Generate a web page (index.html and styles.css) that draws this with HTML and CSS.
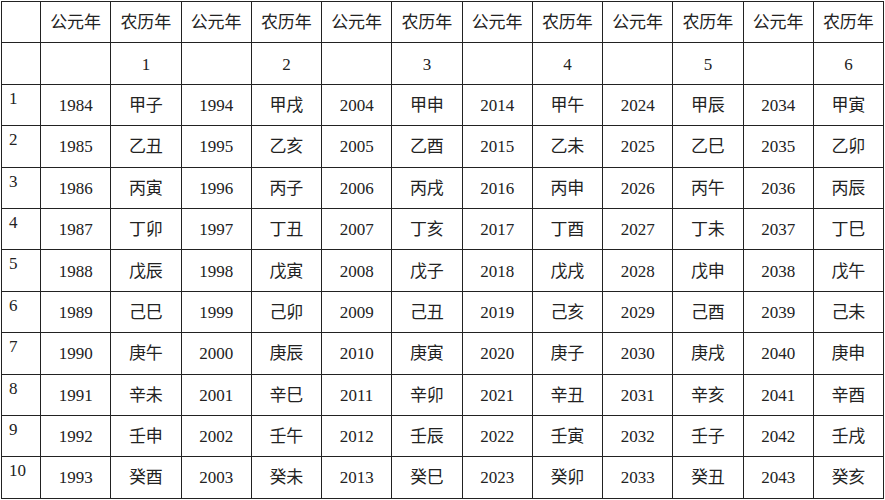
FILE: index.html
```html
<!DOCTYPE html>
<html lang="zh-CN">
<head>
  <meta charset="UTF-8">
  <title>公元年与农历年对照表</title>
  <link rel="stylesheet" href="styles.css">
</head>
<body>

<table class="year-table">
  <colgroup>
    <col class="col-index">
    <col span="12" class="col-year">
  </colgroup>
  <tr>
    <td></td>
    <td>公元年</td><td>农历年</td>
    <td>公元年</td><td>农历年</td>
    <td>公元年</td><td>农历年</td>
    <td>公元年</td><td>农历年</td>
    <td>公元年</td><td>农历年</td>
    <td>公元年</td><td>农历年</td>
  </tr>
  <tr>
    <td></td>
    <td></td><td>1</td>
    <td></td><td>2</td>
    <td></td><td>3</td>
    <td></td><td>4</td>
    <td></td><td>5</td>
    <td></td><td>6</td>
  </tr>
  <tr>
    <td class="num">1</td>
    <td>1984</td><td>甲子</td><td>1994</td><td>甲戌</td><td>2004</td><td>甲申</td>
    <td>2014</td><td>甲午</td><td>2024</td><td>甲辰</td><td>2034</td><td>甲寅</td>
  </tr>
  <tr>
    <td class="num">2</td>
    <td>1985</td><td>乙丑</td><td>1995</td><td>乙亥</td><td>2005</td><td>乙酉</td>
    <td>2015</td><td>乙未</td><td>2025</td><td>乙巳</td><td>2035</td><td>乙卯</td>
  </tr>
  <tr>
    <td class="num">3</td>
    <td>1986</td><td>丙寅</td><td>1996</td><td>丙子</td><td>2006</td><td>丙戌</td>
    <td>2016</td><td>丙申</td><td>2026</td><td>丙午</td><td>2036</td><td>丙辰</td>
  </tr>
  <tr>
    <td class="num">4</td>
    <td>1987</td><td>丁卯</td><td>1997</td><td>丁丑</td><td>2007</td><td>丁亥</td>
    <td>2017</td><td>丁酉</td><td>2027</td><td>丁未</td><td>2037</td><td>丁巳</td>
  </tr>
  <tr>
    <td class="num">5</td>
    <td>1988</td><td>戊辰</td><td>1998</td><td>戊寅</td><td>2008</td><td>戊子</td>
    <td>2018</td><td>戊戌</td><td>2028</td><td>戊申</td><td>2038</td><td>戊午</td>
  </tr>
  <tr>
    <td class="num">6</td>
    <td>1989</td><td>己巳</td><td>1999</td><td>己卯</td><td>2009</td><td>己丑</td>
    <td>2019</td><td>己亥</td><td>2029</td><td>己酉</td><td>2039</td><td>己未</td>
  </tr>
  <tr>
    <td class="num">7</td>
    <td>1990</td><td>庚午</td><td>2000</td><td>庚辰</td><td>2010</td><td>庚寅</td>
    <td>2020</td><td>庚子</td><td>2030</td><td>庚戌</td><td>2040</td><td>庚申</td>
  </tr>
  <tr>
    <td class="num">8</td>
    <td>1991</td><td>辛未</td><td>2001</td><td>辛巳</td><td>2011</td><td>辛卯</td>
    <td>2021</td><td>辛丑</td><td>2031</td><td>辛亥</td><td>2041</td><td>辛酉</td>
  </tr>
  <tr>
    <td class="num">9</td>
    <td>1992</td><td>壬申</td><td>2002</td><td>壬午</td><td>2012</td><td>壬辰</td>
    <td>2022</td><td>壬寅</td><td>2032</td><td>壬子</td><td>2042</td><td>壬戌</td>
  </tr>
  <tr>
    <td class="num">10</td>
    <td>1993</td><td>癸酉</td><td>2003</td><td>癸未</td><td>2013</td><td>癸巳</td>
    <td>2023</td><td>癸卯</td><td>2033</td><td>癸丑</td><td>2043</td><td>癸亥</td>
  </tr>
</table>

</body>
</html>
```

FILE: styles.css
```css
body {
  margin: 0;
  padding: 1px 0 0 1px;
  background-color: #fff;
  font-family: "Liberation Serif", "Noto Sans CJK SC", serif;
  color: #222;
}

.year-table {
  table-layout: fixed;
  width: 883px;
  border-collapse: collapse;
  font-size: 17px;
  line-height: 20px;
}

.col-index {
  width: 39px;
}

.year-table tr {
  height: 41.4px;
}

.year-table td {
  padding: 2px 0 0 0;
  border: 1px solid #222;
  text-align: center;
  vertical-align: middle;
}

.year-table td.num {
  text-align: left;
  vertical-align: top;
  padding: 4px 0 0 7px;
}
```
